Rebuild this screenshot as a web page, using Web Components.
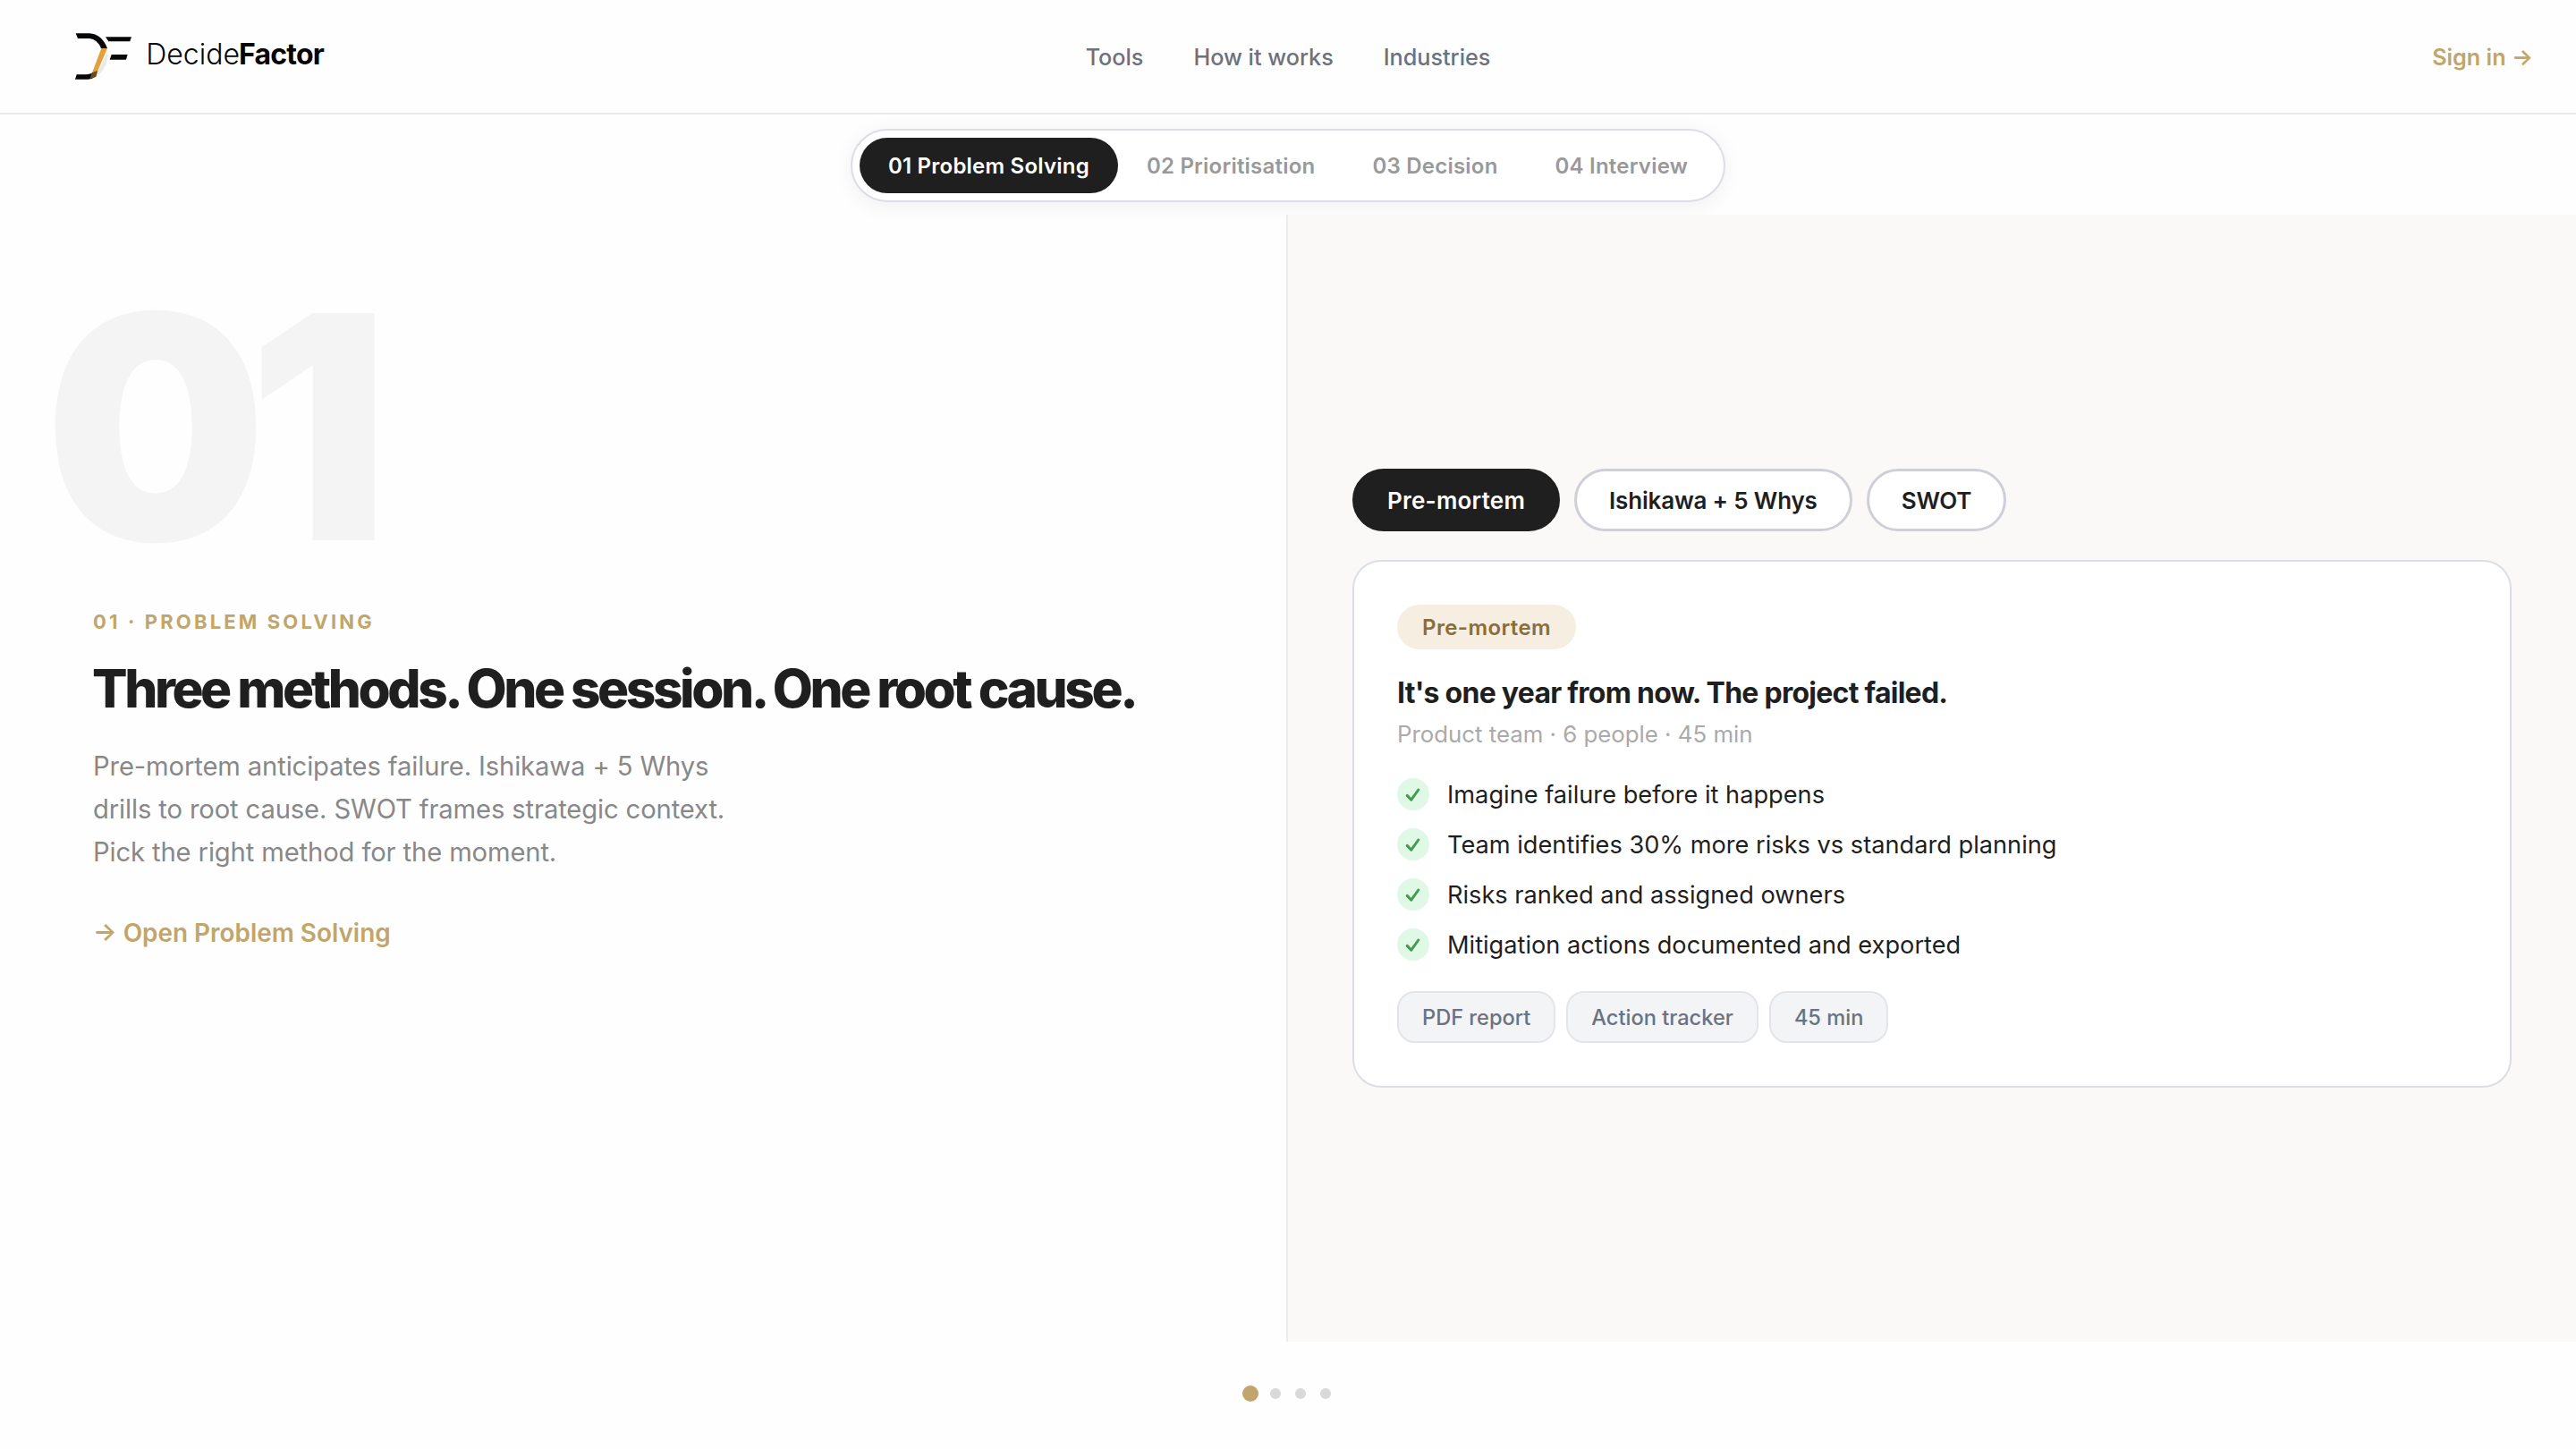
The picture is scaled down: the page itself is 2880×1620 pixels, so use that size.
<!DOCTYPE html>
<html lang="en">
<head>
<meta charset="utf-8">
<title>DecideFactor</title>
<style>
  body {
    margin: 0;
    min-height: 1620px;
    background: #fefefe;
    color: #1f1f1f;
    font-family: Inter, "Liberation Sans", sans-serif;
    --gold: #c2a56a;
    --ink: #1f1f1f;
  }
</style>
</head>
<body>
<df-page></df-page>

<script>
class DfLogo extends HTMLElement {
  connectedCallback() {
    this.attachShadow({ mode: 'open' });
    this.shadowRoot.innerHTML = `
      <style>
        :host { display: flex; align-items: center; color: #060606; }
        svg { width: 65.3px; height: 54px; display: block; }
        .name { font-size: 32px; line-height: 54px; margin-left: 15px; font-weight: 300; padding-bottom: 4px; }
        b { font-weight: 700; letter-spacing: -0.8px; margin-left: -1px; }
      </style>
      <svg viewBox="130 108 196 162">
        <path d="M241 176Q246 222 206 257L212 236Z" fill="#e9e9e9"/>
        <path d="M135 112H181Q222 114 241 162H220Q208 132 181 129H142Z" fill="#060708"/>
        <path d="M138 250H168Q184 250 206 237L203 252Q194 266 176 266H133Z" fill="#060708"/>
        <path d="M221 162H241L209 238L190 244Z" fill="#e2a03f"/>
        <path d="M189 244L209 237L203 258L183 263Z" fill="#6b4a1c"/>
        <path d="M235 124H322L317 139H245Z" fill="#060708"/>
        <path d="M255 183H309L304 200H249Z" fill="#060708"/>
      </svg>
      <span class="name">Decide<b>Factor</b></span>
    `;
  }
}

class DfHeader extends HTMLElement {
  connectedCallback() {
    this.attachShadow({ mode: 'open' });
    this.shadowRoot.innerHTML = `
      <style>
        :host {
          display: grid;
          grid-template-columns: 1fr auto 1fr;
          align-items: center;
          box-sizing: border-box;
          height: 128px;
          border-bottom: 2px solid #e9e9e9;
          padding: 0 48px 0 83px;
          background: #fefefe;
        }
        nav { display: flex; gap: 56px; margin-left: -35px; }
        a { padding-top: 1px; font-size: 25.2px; line-height: 32px; font-weight: 500; color: #6b7280; }
        .signin { justify-self: end; color: var(--gold); font-weight: 600; }
      </style>
      <df-logo></df-logo>
      <nav>
        <a>Tools</a>
        <a>How it works</a>
        <a>Industries</a>
      </nav>
      <a class="signin">Sign in →</a>
    `;
  }
}

class DfStep extends HTMLElement {
  connectedCallback() {
    this.attachShadow({ mode: 'open' });
    this.shadowRoot.innerHTML = `
      <style>
        :host {
          display: block;
          padding: 1px 32px 0;
          border-radius: 31px;
          font-size: 24px;
          line-height: 61px;
          font-weight: 600;
          letter-spacing: 0.22px;
          color: #999;
          white-space: nowrap;
        }
        :host([active]) { background: var(--ink); color: #fff; }
      </style>
      <slot></slot>
    `;
  }
}

class DfSteps extends HTMLElement {
  connectedCallback() {
    this.attachShadow({ mode: 'open' });
    this.shadowRoot.innerHTML = `
      <style>
        :host { display: flex; justify-content: center; padding: 16px 0 14px; }
        .bar {
          display: flex;
          padding: 8px;
          border: 2px solid #dddde6;
          border-radius: 41px;
          background: #fff;
          box-shadow: 0 4px 24px rgba(0, 0, 0, 0.06);
        }
      </style>
      <div class="bar"><slot></slot></div>
    `;
  }
}

class DfIntro extends HTMLElement {
  connectedCallback() {
    this.attachShadow({ mode: 'open' });
    this.shadowRoot.innerHTML = `
      <style>
        :host { display: block; box-sizing: border-box; padding: 63px 0 0 104px; border-right: 2px solid #ececec; }
        .number {
          font-size: 349px;
          line-height: 349px;
          font-weight: 900;
          letter-spacing: -21px;
          margin-left: -54px;
          color: #f4f4f4;
        }
        .label {
          margin-top: 30px;
          font-size: 22px;
          line-height: 26px;
          font-weight: 700;
          letter-spacing: 3.15px;
          color: var(--gold);
        }
        h1 {
          margin: 28px 0 0 -1px;
          font-size: 58.5px;
          line-height: 67px;
          font-weight: 800;
          letter-spacing: -3.43px;
          white-space: nowrap;
        }
        p { margin: 30px 0 0; width: 760px; font-size: 29.2px; line-height: 48px; letter-spacing: -0.12px; color: #888; }
        .open { margin-top: 49px; font-size: 27.9px; line-height: 34px; font-weight: 600; color: var(--gold); }
      </style>
      <div class="number"><slot name="number"></slot></div>
      <div class="label"><slot name="label"></slot></div>
      <h1><slot name="title"></slot></h1>
      <p><slot></slot></p>
      <div class="open"><slot name="link"></slot></div>
    `;
  }
}

class DfMethod extends HTMLElement {
  connectedCallback() {
    this.attachShadow({ mode: 'open' });
    this.shadowRoot.innerHTML = `
      <style>
        :host {
          display: flex;
          justify-content: center;
          box-sizing: border-box;
          height: 70px;
          padding: 1px 36px 0;
          border: 3px solid #cfcfd8;
          border-radius: 35px;
          background: #fff;
          font-size: 26px;
          line-height: 63px;
          font-weight: 600;
          letter-spacing: -0.18px;
          white-space: nowrap;
        }
        :host([active]) { background: var(--ink); border-color: var(--ink); color: #fff; letter-spacing: 0.23px; }
      </style>
      <slot></slot>
    `;
  }
}

class DfCheck extends HTMLElement {
  connectedCallback() {
    this.attachShadow({ mode: 'open' });
    this.shadowRoot.innerHTML = `
      <style>
        :host { display: flex; align-items: center; gap: 20px; height: 36px; font-size: 27.2px; line-height: 36px; }
        svg { width: 36px; height: 36px; flex: none; }
        span { padding-top: 1px; }
      </style>
      <svg viewBox="0 0 36 36">
        <circle cx="18" cy="18" r="18" fill="#e0f9e7"/>
        <path d="M11.2 19.4L15.8 24.2L23.8 13" fill="none" stroke="#439a50" stroke-width="3" stroke-linecap="round" stroke-linejoin="round"/>
      </svg>
      <span><slot></slot></span>
    `;
  }
}

class DfChip extends HTMLElement {
  connectedCallback() {
    this.attachShadow({ mode: 'open' });
    this.shadowRoot.innerHTML = `
      <style>
        :host {
          display: block;
          padding: 1px 26px 0;
          border: 2px solid #e4e5ea;
          border-radius: 20px;
          background: #f3f4f6;
          color: #6b7280;
          font-size: 23.6px;
          line-height: 53px;
          font-weight: 500;
        }
      </style>
      <slot></slot>
    `;
  }
}

class DfCard extends HTMLElement {
  connectedCallback() {
    this.attachShadow({ mode: 'open' });
    this.shadowRoot.innerHTML = `
      <style>
        :host {
          display: flex;
          flex-direction: column;
          align-items: flex-start;
          padding: 48px;
          border: 2px solid #dddde6;
          border-radius: 32px;
          background: #fff;
        }
        .badge {
          padding: 1px 28px 0;
          border-radius: 25px;
          background: #f5eee1;
          color: #8a6d3b;
          font-size: 24px;
          line-height: 49px;
          font-weight: 600;
          letter-spacing: 0.4px;
        }
        h2 { margin: 28px 0 0; font-size: 32px; line-height: 41px; font-weight: 700; letter-spacing: -0.74px; }
        .meta { margin-top: 10px; font-size: 25.8px; line-height: 32px; color: #aaa; }
        .list { display: flex; flex-direction: column; gap: 20px; margin-top: 33px; }
        .chips { display: flex; gap: 12px; margin-top: 34px; }
      </style>
      <div class="badge"><slot name="badge"></slot></div>
      <h2><slot name="title"></slot></h2>
      <div class="meta"><slot name="meta"></slot></div>
      <div class="list"><slot></slot></div>
      <div class="chips"><slot name="chip"></slot></div>
    `;
  }
}

class DfDots extends HTMLElement {
  connectedCallback() {
    this.attachShadow({ mode: 'open' });
    this.shadowRoot.innerHTML = `
      <style>
        :host { display: flex; justify-content: center; align-items: center; gap: 16px; height: 116px; }
        i { width: 12px; height: 12px; border-radius: 50%; background: #d9d9d9; }
        .on { background: var(--gold); transform: scale(1.5); }
      </style>
      <i class="on"></i><i></i><i></i><i></i>
    `;
  }
}

class DfPage extends HTMLElement {
  connectedCallback() {
    this.attachShadow({ mode: 'open' });
    this.shadowRoot.innerHTML = `
      <style>
        :host { display: block; }
        main { display: grid; grid-template-columns: 1fr 1fr; height: 1260px; }
        .detail { background: #faf9f7; padding: 284px 72px 0; }
        .methods { display: flex; gap: 16px; margin-bottom: 32px; }
      </style>
      <df-header></df-header>
      <df-steps>
        <df-step active>01 Problem Solving</df-step>
        <df-step>02 Prioritisation</df-step>
        <df-step>03 Decision</df-step>
        <df-step>04 Interview</df-step>
      </df-steps>
      <main>
        <df-intro>
          <span slot="number">01</span>
          <span slot="label">01 · PROBLEM SOLVING</span>
          <span slot="title">Three methods. One session. One root cause.</span>
          Pre-mortem anticipates failure. Ishikawa + 5 Whys<br>
          drills to root cause. SWOT frames strategic context.<br>
          Pick the right method for the moment.
          <span slot="link">→ Open Problem Solving</span>
        </df-intro>
        <section class="detail">
          <div class="methods">
            <df-method active>Pre-mortem</df-method>
            <df-method>Ishikawa + 5 Whys</df-method>
            <df-method>SWOT</df-method>
          </div>
          <df-card>
            <span slot="badge">Pre-mortem</span>
            <span slot="title">It's one year from now. The project failed.</span>
            <span slot="meta">Product team · 6 people · 45 min</span>
            <df-check>Imagine failure before it happens</df-check>
            <df-check>Team identifies 30% more risks vs standard planning</df-check>
            <df-check>Risks ranked and assigned owners</df-check>
            <df-check>Mitigation actions documented and exported</df-check>
            <df-chip slot="chip">PDF report</df-chip>
            <df-chip slot="chip">Action tracker</df-chip>
            <df-chip slot="chip">45 min</df-chip>
          </df-card>
        </section>
      </main>
      <df-dots></df-dots>
    `;
  }
}

customElements.define('df-logo', DfLogo);
customElements.define('df-header', DfHeader);
customElements.define('df-step', DfStep);
customElements.define('df-steps', DfSteps);
customElements.define('df-intro', DfIntro);
customElements.define('df-method', DfMethod);
customElements.define('df-check', DfCheck);
customElements.define('df-chip', DfChip);
customElements.define('df-card', DfCard);
customElements.define('df-dots', DfDots);
customElements.define('df-page', DfPage);
</script>
</body>
</html>
